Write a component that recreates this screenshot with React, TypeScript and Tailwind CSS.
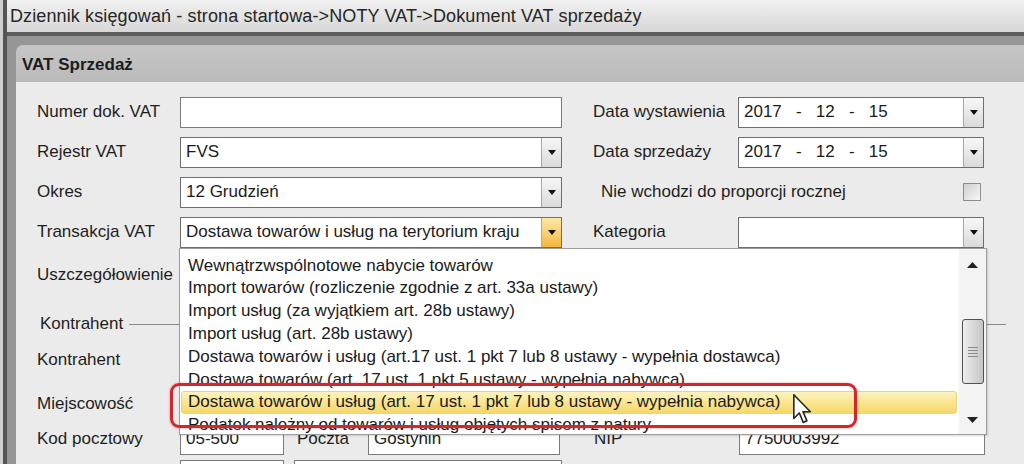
import React from 'react'

function Arrow() {
  return (
    <svg width="8" height="5" viewBox="0 0 8 5">
      <path d="M0 0 H8 L4 5 Z" fill="#111" />
    </svg>
  )
}

function TextBox({ w, value = '' }: { w: string; value?: string }) {
  return (
    <div className={`${w} h-[31px] border border-[#7b7b7b] bg-white flex items-center px-[5px] text-[17px] text-[#1b1b1b] overflow-hidden whitespace-pre`}>
      {value}
    </div>
  )
}

function Combo({ w, value = '', hot = false }: { w: string; value?: string; hot?: boolean }) {
  return (
    <div className={`${w} h-[31px] border border-[#6e6e6e] bg-white flex items-stretch text-[17px] text-[#1b1b1b]`}>
      <div className="flex-1 flex items-center px-[5px] overflow-hidden whitespace-pre">{value}</div>
      <div
        className={
          hot
            ? 'w-[20px] border-l border-[#d8a24a] bg-gradient-to-b from-[#fde9a6] to-[#f4b63c] flex items-center justify-center'
            : 'w-[20px] border-l border-[#a6a6a6] bg-gradient-to-b from-[#f7f7f7] to-[#dadada] flex items-center justify-center'
        }
      >
        <Arrow />
      </div>
    </div>
  )
}

function Label({ children, w = 'w-[143px]' }: { children: React.ReactNode; w?: string }) {
  return <div className={`${w} shrink-0 text-[17px] text-[#1e1e1e] whitespace-nowrap`}>{children}</div>
}

const options = [
  'Wewnątrzwspólnotowe nabycie towarów',
  'Import towarów (rozliczenie zgodnie z art. 33a ustawy)',
  'Import usług (za wyjątkiem art. 28b ustawy)',
  'Import usług (art. 28b ustawy)',
  'Dostawa towarów i usług (art.17 ust. 1 pkt 7 lub 8 ustawy - wypełnia dostawca)',
  'Dostawa towarów (art. 17 ust. 1 pkt 5 ustawy - wypełnia nabywca)',
  'Dostawa towarów i usług (art. 17 ust. 1 pkt 7 lub 8 ustawy - wypełnia nabywca)',
  'Podatek należny od towarów i usług objętych spisem z natury',
]

export default function App() {
  return (
    <div className="relative w-[1024px] h-[464px] overflow-hidden flex bg-[#dcdcdc] font-['Liberation_Sans',Arial,sans-serif]">
      <div className="w-[3px] shrink-0 bg-[#cfcfcf]" />
      <div className="w-[4px] shrink-0 bg-[#555]" />
      <div className="flex-1 flex flex-col min-w-0">
        {/* window title */}
        <div className="h-[32px] shrink-0 bg-gradient-to-b from-[#f1f1f1] to-[#d7d7d7] flex items-center pl-[3px] text-[18px] tracking-[0.12px] text-[#262626] whitespace-nowrap">
          Dziennik księgowań - strona startowa-&gt;NOTY VAT-&gt;Dokument VAT sprzedaży
        </div>
        <div className="h-[4px] shrink-0 bg-[#5c5c5c]" />
        <div className="flex-1 bg-[#969696] pl-[9px] pt-[9px] flex flex-col min-h-0">
          <div className="flex-1 flex flex-col rounded-tl-[7px] overflow-hidden">
            <div className="h-[37px] shrink-0 bg-gradient-to-b from-[#c6c6c6] to-[#bababa] flex items-center pl-[6px] pt-[2px] text-[17px] font-bold text-[#1c1c1c]">
              VAT Sprzedaż
            </div>
            <div className="flex-1 bg-[#ebebeb] pt-[15px] pl-[21px] flex flex-col gap-[10px]">
              <div className="flex items-center h-[30px]">
                <Label>Numer dok. VAT</Label>
                <TextBox w="w-[382px]" />
                <div className="w-[31px]" />
                <Label w="w-[145px]">Data wystawienia</Label>
                <Combo w="w-[246px]" value="2017   -   12   -   15" />
              </div>
              <div className="flex items-center h-[30px]">
                <Label>Rejestr VAT</Label>
                <Combo w="w-[382px]" value="FVS" />
                <div className="w-[31px]" />
                <Label w="w-[145px]">Data sprzedaży</Label>
                <Combo w="w-[246px]" value="2017   -   12   -   15" />
              </div>
              <div className="flex items-center h-[30px]">
                <Label>Okres</Label>
                <Combo w="w-[382px]" value="12 Grudzień" />
                <div className="w-[39px]" />
                <div className="w-[362px] text-[17px] text-[#1e1e1e] whitespace-nowrap">Nie wchodzi do proporcji rocznej</div>
                <div className="w-[18px] h-[18px] border border-[#8e8e8e] bg-gradient-to-br from-[#d0d0d0] to-[#f7f7f7]" />
              </div>
              <div className="flex items-center h-[30px]">
                <Label>Transakcja VAT</Label>
                <Combo w="w-[382px]" value="Dostawa towarów i usług na terytorium kraju" hot />
                <div className="w-[31px]" />
                <Label w="w-[145px]">Kategoria</Label>
                <Combo w="w-[246px]" />
              </div>
              <div className="flex items-center h-[30px] mt-[3px]">
                <Label>Uszczegółowienie</Label>
                <Combo w="w-[382px]" />
              </div>
              {/* group separator */}
              <div className="flex items-center h-[20px] mt-[14px] pl-[3px] pr-[18px]">
                <span className="text-[17px] text-[#1e1e1e]">Kontrahent</span>
                <div className="flex-1 ml-[6px] h-px bg-[#8a8a8a]" />
              </div>
              <div className="flex items-center h-[30px] mt-[1px]">
                <Label>Kontrahent</Label>
                <Combo w="w-[382px]" />
              </div>
              <div className="flex items-center h-[30px] mt-[4px]">
                <Label>Miejscowość</Label>
                <TextBox w="w-[382px]" />
              </div>
              <div className="flex items-center h-[30px] -mt-[5px]">
                <Label>Kod pocztowy</Label>
                <TextBox w="w-[104px]" value="05-500" />
                <div className="w-[13px]" />
                <Label w="w-[71px]">Poczta</Label>
                <TextBox w="w-[192px]" value="Gostynin" />
                <div className="w-[34px]" />
                <Label w="w-[145px]">NIP</Label>
                <TextBox w="w-[246px]" value="7750003992" />
              </div>
              <div className="flex items-center h-[30px] -mt-[4px]">
                <Label> </Label>
                <TextBox w="w-[104px]" />
                <div className="w-[10px]" />
                <TextBox w="w-[268px]" />
              </div>
            </div>
          </div>
        </div>
      </div>

      {/* open drop-down list */}
      <div className="absolute left-[179px] top-[248px] w-[808px] h-[187px] bg-white border border-[#9c9c9c] shadow-[1px_1px_2px_rgba(0,0,0,0.15)] flex overflow-hidden">
        <div className="flex-1 pt-[5px] pl-[1px] pr-[2px]">
          {options.map((o, i) => (
            <div
              key={o}
              className={
                i === 6
                  ? 'h-[22.8px] flex items-center pl-[6px] text-[17px] text-[#1a1a1a] whitespace-nowrap rounded-[3px] border border-[#f0d27a] bg-gradient-to-b from-[#fdf3c0] via-[#fae58f] to-[#f5d86a]'
                  : 'h-[22.8px] flex items-center pl-[7px] text-[17px] text-[#1a1a1a] whitespace-nowrap'
              }
            >
              {o}
            </div>
          ))}
        </div>
        <div className="w-[27px] bg-[#f3f3f3] flex flex-col items-center">
          <div className="h-[32px] flex items-center justify-center">
            <svg width="11" height="6" viewBox="0 0 11 6">
              <path d="M0 6 L5.5 0 L11 6 Z" fill="#222" />
            </svg>
          </div>
          <div className="mt-[38px] w-[22px] h-[65px] rounded-[3px] border-[1.5px] border-[#505050] bg-gradient-to-r from-[#eeeeee] via-[#d9d9d9] to-[#c4c4c4] flex flex-col items-center justify-center gap-[2px]">
            <div className="w-[10px] h-px bg-[#8d8d8d]" />
            <div className="w-[10px] h-px bg-[#8d8d8d]" />
            <div className="w-[10px] h-px bg-[#8d8d8d]" />
            <div className="w-[10px] h-px bg-[#8d8d8d]" />
          </div>
          <div className="flex-1" />
          <div className="h-[28px] flex items-center justify-center">
            <svg width="11" height="6" viewBox="0 0 11 6">
              <path d="M0 0 L11 0 L5.5 6 Z" fill="#222" />
            </svg>
          </div>
        </div>
      </div>

      {/* red annotation */}
      <div className="absolute left-[170px] top-[383px] w-[687px] h-[45px] rounded-[9px] border-[3px] border-[#d6262b] shadow-[0_0_3px_rgba(214,38,43,0.4)]" />

      {/* mouse cursor */}
      <svg className="absolute left-[793px] top-[394px]" width="19" height="30" viewBox="0 0 12 19">
        <path d="M0.5 0.5 L0.5 15.5 L4 12 L6.5 18 L8.8 17 L6.3 11.2 L11 11.2 Z" fill="#fff" stroke="#222" strokeWidth="1" strokeLinejoin="round" />
      </svg>
    </div>
  )
}
